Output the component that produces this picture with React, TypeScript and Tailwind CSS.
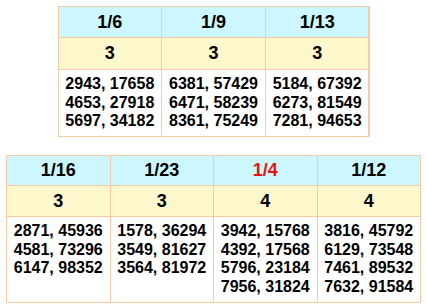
import React from 'react';

type Col = { head: string; count: string; pairs: string[]; red?: boolean };

const top: Col[] = [
  { head: '1/6', count: '3', pairs: ['2943, 17658', '4653, 27918', '5697, 34182'] },
  { head: '1/9', count: '3', pairs: ['6381, 57429', '6471, 58239', '8361, 75249'] },
  { head: '1/13', count: '3', pairs: ['5184, 67392', '6273, 81549', '7281, 94653'] },
];

const bottom: Col[] = [
  { head: '1/16', count: '3', pairs: ['2871, 45936', '4581, 73296', '6147, 98352'] },
  { head: '1/23', count: '3', pairs: ['1578, 36294', '3549, 81627', '3564, 81972'] },
  { head: '1/4', count: '4', pairs: ['3942, 15768', '4392, 17568', '5796, 23184', '7956, 31824'], red: true },
  { head: '1/12', count: '4', pairs: ['3816, 45792', '6129, 73548', '7461, 89532', '7632, 91584'] },
];

const FracTable = ({ cols, width, headH, countH, dataH, gridClass }: {
  cols: Col[]; width: string; headH: string; countH: string; dataH: string; gridClass: string;
}) => (
  <div className={`grid ${gridClass} gap-px bg-[#f5cba7] p-px ${width}`}>
    {cols.map((c) => (
      <div key={'h' + c.head} className={`${headH} bg-[#ccf7ff] flex items-center justify-center text-[18px] font-bold ${c.red ? 'text-[#ee1111]' : 'text-black'}`}>
        {c.head}
      </div>
    ))}
    {cols.map((c) => (
      <div key={'c' + c.head} className={`${countH} bg-[#fff8cc] flex items-center justify-center text-[18px] font-bold text-black`}>
        {c.count}
      </div>
    ))}
    {cols.map((c) => (
      <div key={'d' + c.head} className={`${dataH} bg-white pt-[5px] text-center text-[16px] leading-[18.5px] font-bold text-black`}>
        {c.pairs.map((p) => (
          <div key={p}>{p}</div>
        ))}
      </div>
    ))}
  </div>
);

export default function App() {
  return (
    <div className="w-[427px] h-[307px] bg-white flex flex-col items-center pt-[6px] gap-[18px] font-['Liberation_Sans',Arial,sans-serif]">
      <FracTable cols={top} width="w-[312px]" headH="h-[30px]" countH="h-[31px]" dataH="h-[66px]" gridClass="grid-cols-3" />
      <FracTable cols={bottom} width="w-[415px]" headH="h-[29px]" countH="h-[30px]" dataH="h-[85px]" gridClass="grid-cols-4" />
    </div>
  );
}
